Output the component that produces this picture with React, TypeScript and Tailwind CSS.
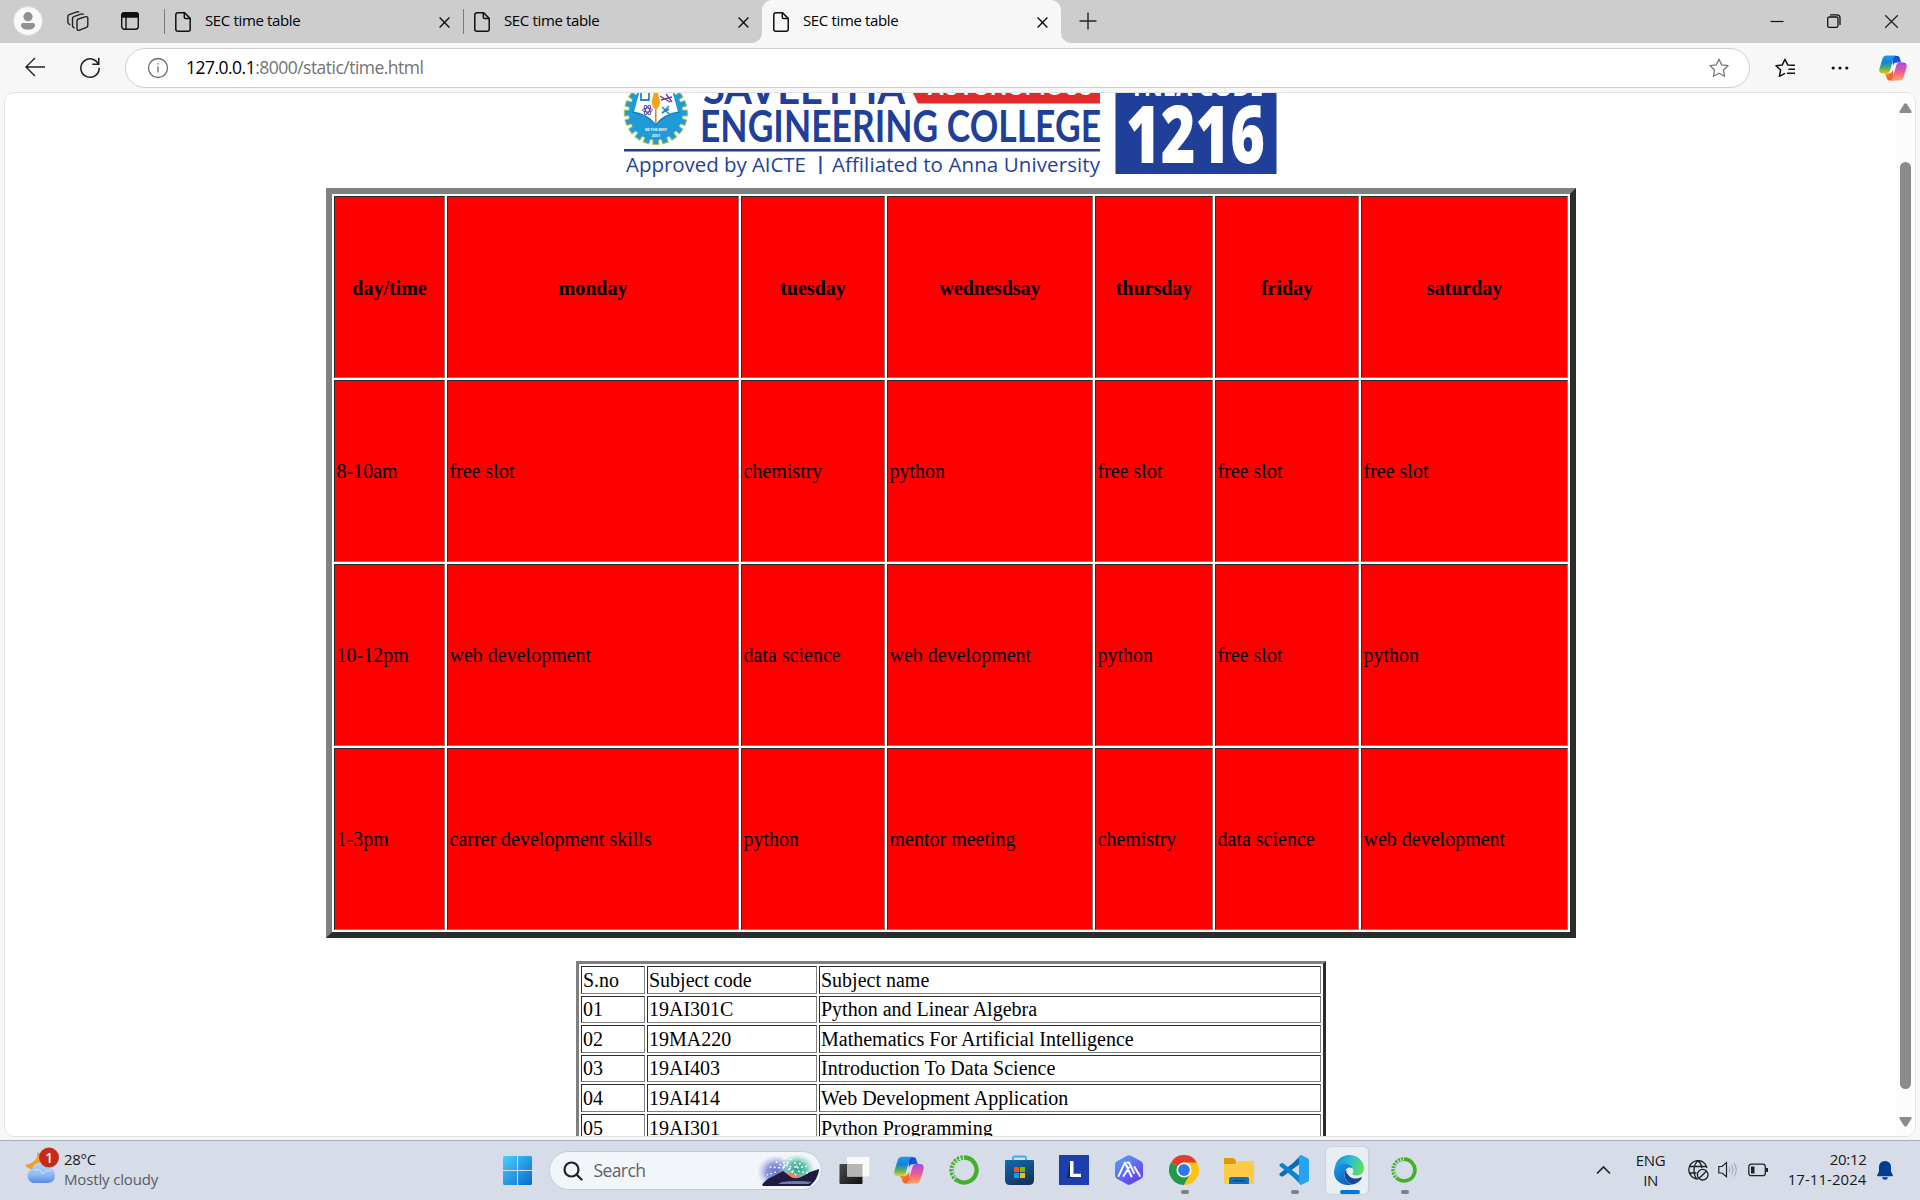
import React from "react";

type P = { children?: React.ReactNode };

const DocIcon = () => (
  <svg width="16" height="20" viewBox="0 0 16 20" fill="none" stroke="#111" strokeWidth="1.5">
    <path d="M2.8 .8H9.6L15.2 6.4V17.2a2 2 0 0 1-2 2H2.8a2 2 0 0 1-2-2V2.8a2 2 0 0 1 2-2Z" />
    <path d="M9.3 1V5.2a1.4 1.4 0 0 0 1.4 1.4H15" />
  </svg>
);

const TabClose = () => (
  <svg width="11" height="11" viewBox="0 0 11 11" stroke="#111" strokeWidth="1.4">
    <path d="M.6 .6 10.4 10.4M10.4 .6.6 10.4" />
  </svg>
);

const Tab = ({ active = false }: { active?: boolean }) => (
  <div className={active ? "relative flex h-[43px] w-[299px] items-center rounded-t-[10px] bg-[#f7f7f7]" : "relative flex h-[43px] w-[299px] items-center"}>
    {active ? (
      <>
        <svg className="absolute bottom-0 -left-[10px]" width="10" height="10"><path d="M10 0V10H0A10 10 0 0 0 10 0Z" fill="#f7f7f7" /></svg>
        <svg className="absolute bottom-0 -right-[10px]" width="10" height="10"><path d="M0 0V10H10A10 10 0 0 1 0 0Z" fill="#f7f7f7" /></svg>
      </>
    ) : (
      <div className="absolute top-[9px] left-0 h-[25px] w-px bg-[#7c7c7c]" />
    )}
    <div className="ml-[11px] h-5 w-4"><DocIcon /></div>
    <span className="ml-[14px] -mt-[3px] text-[15px] tracking-[-0.36px]">SEC time table</span>
    <div className="mt-px mr-[13.5px] ml-auto"><TabClose /></div>
  </div>
);

const Copilot = ({ id, w, h }: { id: string; w: number; h: number }) => (
  <svg width={w} height={h} viewBox="0 0 28 26">
    <defs>
      <linearGradient id={id + "a"} x1="0" y1="0" x2="0" y2="1">
        <stop offset="0" stopColor="#1a9af0" /><stop offset=".4" stopColor="#1583d8" /><stop offset=".7" stopColor="#52b35a" /><stop offset="1" stopColor="#f0c80e" />
      </linearGradient>
      <linearGradient id={id + "b"} x1="0" y1="0" x2="0" y2="1">
        <stop offset="0" stopColor="#a24df0" /><stop offset=".5" stopColor="#ee5a92" /><stop offset="1" stopColor="#fda45c" />
      </linearGradient>
      <linearGradient id={id + "c"} x1="0" y1="0" x2="1" y2="1">
        <stop offset="0" stopColor="#1646c8" /><stop offset="1" stopColor="#2063e8" />
      </linearGradient>
      <linearGradient id={id + "d"} x1="0" y1="0" x2="1" y2="1">
        <stop offset="0" stopColor="#f9a13a" /><stop offset="1" stopColor="#f04a28" />
      </linearGradient>
    </defs>
    <path d="M13 1H18.5C20.5 1 20.8 3 21.4 5.2 21.9 7 22.8 7.6 24 7.6H18C15.5 7.6 14.6 8.6 14 11Z" fill={`url(#${id}c)`} />
    <path d="M15 25.5H10.5C8.300 25.500 7.800 23.500 7 21 6.500 19.200 5.500 18.500 4 18.500H9.500C12 18.500 13.200 17 14 14.500Z" fill={`url(#${id}d)`} />
    <path d="M8 .6H17.500C15.500 .8 14.800 2.500 14.200 4.600L11 15.500C10.400 17.600 9.200 18.600 7.200 18.600H3.800C.8 18.600 -.3 16.500 .5 13.500L3.200 4.500C4 1.800 5.300 .6 8 .6Z" fill={`url(#${id}a)`} />
    <path d="M20 25.500H10.500C12.500 25.300 13.300 23.600 14 21.500L17.200 10.500C17.800 8.500 19 7.500 21 7.500H24.200C27.200 7.500 28.300 9.500 27.500 12.500L24.800 21.600C24 24.300 22.700 25.500 20 25.500Z" fill={`url(#${id}b)`} />
  </svg>
);

const star = "M10 1.200 12.700 6.900 19 7.700 14.400 12 15.600 18.300 10 15.200 4.400 18.300 5.600 12 1 7.700 7.300 6.900Z";

const TitleBar = () => (
  <div className="flex h-[43px] shrink-0 bg-[#cdcdcd]">
    <svg className="mt-[6px] ml-[13px]" width="30" height="30" viewBox="0 0 30 30">
      <circle cx="15" cy="15" r="14.500" fill="#f9f9f9" stroke="#ddd" />
      <circle cx="15" cy="10.700" r="4.600" fill="#919191" />
      <path d="M8 19a2 2 0 0 1 2-2H20a2 2 0 0 1 2 2c0 3-3 4.700-7 4.700S8 22 8 19Z" fill="#919191" />
    </svg>
    <svg className="mt-[11px] ml-6" width="22" height="21" viewBox="0 0 22 21" fill="none" stroke="#222" strokeWidth="1.400" strokeLinejoin="round">
      <path d="M11.300 8 18.800 5.700a1.500 1.500 0 0 1 2 1.400V14.500a2 2 0 0 1-1.400 1.900L12 19.300a1.500 1.500 0 0 1-2-1.400V9.900A2 2 0 0 1 11.300 8Z" />
      <path d="M7.500 17.200 6.300 16.300a2 2 0 0 1-.8-1.600V7.500a2 2 0 0 1 1.300-1.900L14.600 2.900q1.200-.3 2 .8" />
      <path d="M3.200 14 1.700 12.800a2 2 0 0 1-.8-1.600V5.500A2 2 0 0 1 2.200 3.600L10 .9q1.200-.3 2 .6" />
    </svg>
    <svg className="mt-3 ml-8" width="18" height="18" viewBox="0 0 18 18" fill="none" stroke="#111" strokeWidth="1.400">
      <rect x=".7" y=".7" width="16.600" height="16.600" rx="2.800" />
      <path d="M.7 5V3A2.300 2.300 0 0 1 3 .7H15A2.300 2.300 0 0 1 17.300 3V5Z" fill="#111" />
      <path d="M5 5V17" />
    </svg>
    <div className="ml-[25px] flex">
      <Tab /><Tab /><Tab active />
    </div>
    <svg className="mt-3 ml-[18px]" width="18" height="18" stroke="#222" strokeWidth="1.400"><path d="M9 .5V17.500M.5 9H17.500" /></svg>
    <div className="mt-[14px] mr-[21px] ml-auto flex">
      <svg width="14" height="15" stroke="#111" strokeWidth="1.200"><path d="M.5 7.500H13.500" /></svg>
      <svg className="ml-[43px]" width="14" height="15" fill="none" stroke="#111" strokeWidth="1.300"><rect x=".7" y="3" width="10.300" height="10.300" rx="1.500" /><path d="M3 .9H10A3 3 0 0 1 13 3.900V11" /></svg>
      <svg className="ml-[43px]" width="15" height="15" stroke="#222" strokeWidth="1.300"><path d="M1.200 1.200 13.800 13.800M13.800 1.200 1.200 13.800" /></svg>
    </div>
  </div>
);

const ToolBar = () => (
  <div className="flex h-[49px] shrink-0 bg-[#f7f7f7]">
    <svg className="mt-[14px] ml-[25px] shrink-0" width="21" height="20" fill="none" stroke="#222" strokeWidth="1.400"><path d="M20 10H1M10 1 1 10l9 9" /></svg>
    <svg className="mt-[14px] ml-[33px] shrink-0" width="22" height="22" fill="none" stroke="#222" strokeWidth="1.500"><path d="M19.500 7.500A9.200 9.200 0 1 0 20.200 10.700M19.800 .8V7.300H13.300" /></svg>
    <div className="mt-[5px] ml-6 flex h-[40px] w-[1625px] shrink-0 items-center rounded-full border border-[#cfcfcf] bg-white">
      <svg className="ml-[21px]" width="22" height="22" fill="none" stroke="#6c6c6c" strokeWidth="1.300"><circle cx="11" cy="11" r="9.500" /><path d="M11 9.500V15.500" /><path d="M11 6V7.500" /></svg>
      <span className="-mt-[2px] ml-[17px] text-[17.5px] tracking-[-0.52px] text-[#737373]"><span className="text-black">127.0.0.1</span>:8000/static/time.html</span>
      <svg className="mr-5 ml-auto" width="20" height="20" viewBox="0 0 20 20" fill="none" stroke="#777" strokeWidth="1.300" strokeLinejoin="round"><path d={star} /></svg>
    </div>
    <svg className="mt-[15px] ml-[25px] shrink-0" width="21" height="20" viewBox="0 0 21 20" fill="none" stroke="#111" strokeWidth="1.500" strokeLinejoin="round">
      <path d="M17 7.300 12.700 6.900 10 1.200 7.300 6.900 1 7.700 5.600 12 4.400 18.300 10 15.300M13 7.200H20M13.500 11.300H20M12 15.300H20" />
    </svg>
    <svg className="mt-[22px] ml-[35px] shrink-0" width="18" height="6" fill="#111"><circle cx="2.200" cy="3" r="1.600" /><circle cx="9" cy="3" r="1.600" /><circle cx="15.800" cy="3" r="1.600" /></svg>
    <div className="mt-[12px] ml-[30px] shrink-0"><Copilot id="tb" w={28} h={26} /></div>
  </div>
);

const teeth = Array.from({ length: 20 }, (_, i) => i * 18);

const Banner = () => (
  <svg className="ml-[614px] block shrink-0" width="660" height="95" viewBox="620 93 660 95">
    <g>
      {teeth.map((a) => (
        <rect key={a} x="652.900" y="81.500" width="5.800" height="10" fill="#2299d8" stroke="#a4c94c" strokeWidth="1" transform={`rotate(${a} 655.800 113)`} />
      ))}
      <circle cx="655.800" cy="113" r="27" fill="#1f9bd9" />
      <path d="M634 112 640 90H672L678 112Q664 115 655.800 124 647 115 634 112Z" fill="#fff" />
      <path d="M632 112Q647 114 655.800 125 664 114 680 112" fill="none" stroke="#1781c0" strokeWidth="1.500" />
      <path d="M655.800 108V123" stroke="#b58c3c" strokeWidth="1.500" />
      <path d="M654 92H658L659 98Q662 105 655.800 110 650 105 652.500 98Z" fill="#f3a51c" />
      <path d="M641 93V100H649V93" fill="none" stroke="#2387c8" strokeWidth="1.800" />
      <path d="M660 96 670 102M661 100 672 97M666 94 672 102" stroke="#6a3b91" strokeWidth="1.300" />
      <g fill="none" stroke="#59489d" strokeWidth="1">
        <ellipse cx="647.500" cy="110" rx="5" ry="2" /><ellipse cx="647.500" cy="110" rx="5" ry="2" transform="rotate(60 647.500 110)" /><ellipse cx="647.500" cy="110" rx="5" ry="2" transform="rotate(120 647.500 110)" />
      </g>
      <path d="M662 107 670 115M669 106 662 113 669 109" fill="none" stroke="#2387c8" strokeWidth="1.500" />
      <g fill="#e7f6ff" fontFamily="Open Sans, sans-serif" fontWeight="700" fontSize="4" textAnchor="middle">
        <text x="656" y="131.300" textLength="22">BE THE BEST</text>
        <text x="656" y="136.500">2001</text>
      </g>
    </g>
    <g fill="#1f3f99" fontFamily="Lato, sans-serif" fontWeight="700">
      <text x="703" y="103.500" fontSize="43" textLength="202" lengthAdjust="spacingAndGlyphs">SAVEETHA</text>
      <text x="700" y="142.300" fontSize="43" textLength="401" lengthAdjust="spacingAndGlyphs">ENGINEERING COLLEGE</text>
    </g>
    <path d="M913 93H1100V103.500H918Z" fill="#e32a2c" />
    <text x="928" y="95" fill="#fff" fontFamily="Lato, sans-serif" fontWeight="900" fontSize="22" textLength="164" lengthAdjust="spacingAndGlyphs">AUTONOMOUS</text>
    <rect x="624" y="149" width="476" height="2.500" fill="#1f3f99" />
    <text x="626" y="172" fill="#1f3f99" fontFamily="Open Sans, sans-serif" fontWeight="500" fontSize="20.500" textLength="180" lengthAdjust="spacing">Approved by AICTE</text>
    <rect x="819.500" y="156" width="2" height="18" fill="#1f3f99" />
    <text x="832" y="172" fill="#1f3f99" fontFamily="Open Sans, sans-serif" fontWeight="500" fontSize="20.500" textLength="268" lengthAdjust="spacing">Affiliated to Anna University</text>
    <rect x="1115.500" y="93" width="161" height="81" fill="#1f3f99" />
    <g fill="#fff" fontFamily="Open Sans, sans-serif" fontWeight="700">
      <text x="1130" y="96" fontSize="23" textLength="133" lengthAdjust="spacingAndGlyphs">TNEA CODE</text>
      <text x="1126" y="162.500" fontSize="80" fontWeight="800" textLength="139" lengthAdjust="spacingAndGlyphs">1216</text>
    </g>
  </svg>
);

const rows = [
  ["day/time", "monday", "tuesday", "wednesdsay", "thursday", "friday", "saturday"],
  ["8-10am", "free slot", "chemistry", "python", "free slot", "free slot", "free slot"],
  ["10-12pm", "web development", "data science", "web development", "python", "free slot", "python"],
  ["1-3pm", "carrer development skills", "python", "mentor meeting", "chemistry", "data science", "web development"],
];

const subjects = [
  ["S.no", "Subject code", "Subject name"],
  ["01", "19AI301C", "Python and Linear Algebra"],
  ["02", "19MA220", "Mathematics For Artificial Intelligence"],
  ["03", "19AI403", "Introduction To Data Science"],
  ["04", "19AI414", "Web Development Application"],
  ["05", "19AI301", "Python Programming"],
];

const bevelIn = "border border-t-[#2c2c2c] border-l-[#2c2c2c] border-r-[#808080] border-b-[#808080]";

const Page = () => (
  <div className="h-[1047px] shrink-0 bg-[#f7f7f7] px-[4px]">
    <div className="flex h-[1045px] overflow-hidden rounded-[10px] border border-[#e2e2e2] bg-white">
      <div className="flex h-[1043px] w-[1891px] flex-col overflow-hidden font-['Liberation_Serif',serif] text-[20px] leading-[23px] text-black">
        <div className="ml-px"><Banner /></div>
        <div className="ml-[321px] grid h-[750px] w-[1250px] shrink-0 grid-cols-[111px_292px_144px_206px_118px_144px_207px] grid-rows-[182px_182px_182px_182px] gap-[2px] border-[6px] border-t-[#808080] border-l-[#808080] border-r-[#2c2c2c] border-b-[#2c2c2c] p-[2px]">
          {rows.map((r, i) =>
            r.map((c, j) => (
              <div key={`${i}-${j}`} className={bevelIn + (i === 0 ? " flex items-center justify-center bg-[#ff0000] pt-[2px] font-bold" : " flex items-center bg-[#ff0000] pt-px pl-[1.5px]")}>{c}</div>
            ))
          )}
        </div>
        <div className="mt-[23px] ml-[571px] grid w-[750px] shrink-0 grid-cols-[64px_170px_502px] grid-rows-[28px_27px_28px_27px_28px_28px] gap-[2px] border-[3px] border-t-[#808080] border-l-[#808080] border-r-[#2c2c2c] border-b-[#2c2c2c] p-[2px]">
          {subjects.map((r) => r.map((c) => <div key={c} className={bevelIn + " flex items-center pl-px"}>{c}</div>))}
        </div>
      </div>
      <div className="flex w-[18px] flex-col items-center bg-[#fcfcfc]">
        <svg className="mt-[10px]" width="13" height="11"><path d="M5 1.200Q6.500-.8 8 1.200L12.300 8Q13.300 10 11.500 10H1.500Q-.3 10 .7 8Z" fill="#8b8b8b" /></svg>
        <div className="mt-[48px] h-[927px] w-[11px] rounded-full bg-[#8b8b8b]" />
        <svg className="mt-[28px]" width="13" height="11"><path d="M5 8.800Q6.500 10.800 8 8.800L12.300 2Q13.300 0 11.500 0H1.500Q-.3 0 .7 2Z" fill="#8b8b8b" /></svg>
      </div>
    </div>
  </div>
);

const Slot = ({ children, dot = false }: P & { dot?: boolean }) => (
  <div className="relative flex h-[58px] w-[55px] shrink-0 items-center justify-center">
    {children}
    {dot && <div className="absolute bottom-[5px] left-[24px] h-[4px] w-[8px] rounded-full bg-[#7c8087]" />}
  </div>
);

const Ring = ({ s }: { s: number }) => (
  <svg width={s} height={s} viewBox="0 0 30 30" fill="none" stroke="#43b02a">
    <path d="M15 2.500A12.500 12.500 0 1 1 8 25.300" strokeWidth="4.300" />
    <path d="M8 25.300A12.500 12.500 0 0 1 15 2.500" strokeWidth="4.500" strokeDasharray="2.300 1.200" />
    <path d="M6 22A12 12 0 0 1 13 3.500" stroke="#d5dde8" strokeWidth="1.200" strokeDasharray="1.300 1.500" />
  </svg>
);

const Edge = () => (
  <svg width="30" height="30" viewBox="0 0 30 30">
    <defs>
      <linearGradient id="e1" x1="0" y1=".3" x2="1" y2=".6"><stop offset="0" stopColor="#1b8fd8" /><stop offset=".5" stopColor="#2bc0d8" /><stop offset="1" stopColor="#62e04a" /></linearGradient>
      <linearGradient id="e2" x1="0" y1="0" x2=".5" y2="1"><stop offset="0" stopColor="#1aa0e8" /><stop offset="1" stopColor="#0b62c4" /></linearGradient>
    </defs>
    <path d="M1 12C2 5 8 0 15 0 24 0 30 6.500 30 13 30 18 26.500 20.500 22.500 20.500 19 20.500 17.500 19.300 18.300 17.800 20.500 14 17 9.500 11 9.500 6 9.500 2 13 .1 16Z" fill="url(#e1)" />
    <path d="M.1 16C1 11.500 5.500 8.500 10.500 8.500 15 8.500 18.500 11 18.800 14 16 11.500 11.500 13 10.500 18 9.500 24 14 29 19 29.500 8 32-1 25 .1 16Z" fill="url(#e2)" />
    <path d="M11 16C9 21 12 28.500 19 29.500 23 28.500 26 26 27.800 23.200 28.200 22.500 27.600 22 26.800 22.400 20 25.500 12.500 22 13 15Z" fill="#12479c" />
    <circle cx="15.800" cy="16" r="3.500" fill="#e9eef5" />
  </svg>
);

const Taskbar = () => (
  <div className="flex h-[60px] shrink-0 overflow-hidden border-t border-[#a7adb8] bg-[#d6dde9] text-[15px] leading-[20px] text-[#191919]">
    <svg className="mt-[5px] ml-[24px] shrink-0" width="36" height="40" viewBox="0 0 36 40">
      <defs><linearGradient id="cl" x1="0" y1="0" x2="0" y2="1"><stop offset="0" stopColor="#b9d6f8" /><stop offset=".6" stopColor="#8fb9f2" /><stop offset="1" stopColor="#588ce2" /></linearGradient></defs>
      <path d="M13 6Q15 16 1 19 4 24 12 24L22 20 17 8Z" fill="#f2a024" />
      <path d="M9 37A7.500 7.500 0 0 1 8 23Q9.500 17 16 16.500 21 16 23.500 22 31 22 31 29.500 31 37 23 37Z" fill="url(#cl)" />
      <path d="M10 24Q16 22 19 28 22 23 27 25" fill="none" stroke="#d4e6fc" strokeWidth="1" />
      <circle cx="25" cy="11.500" r="10" fill="#c42b1c" />
      <text x="25" y="16.500" textAnchor="middle" fontSize="13.500" fontWeight="600" fill="#fff" fontFamily="Open Sans, sans-serif">1</text>
    </svg>
    <div className="mt-[8px] ml-1 w-[425.5px] tracking-[-0.3px]"><div>28°C</div><div className="text-[#555b64] tracking-[-0.15px]">Mostly cloudy</div></div>
    <Slot>
      <svg width="29" height="29" viewBox="0 0 29 29"><defs><linearGradient id="wn" x1="0" y1="0" x2="1" y2="1"><stop offset="0" stopColor="#4bd0fb" /><stop offset="1" stopColor="#0669ce" /></linearGradient></defs><path d="M1 0H14V14H0V1ZM15 0H28L29 1V14H15ZM0 15H14V29H1L0 28ZM15 15H29V28L28 29H15Z" fill="url(#wn)" /></svg>
    </Slot>
    <div className="mt-[10px] mr-[4.5px] ml-[4px] flex h-[39px] w-[273.5px] shrink-0 items-center rounded-full border border-[#c3cbd9] bg-[#f2f5f9]">
      <svg className="ml-[13px]" width="20" height="20" fill="none" stroke="#222" strokeWidth="2.200"><circle cx="8.500" cy="8.500" r="7" /><path d="M13.500 13.500 18.500 18.500" strokeLinecap="round" /></svg>
      <span className="-mt-px ml-[11px] text-[17.5px] tracking-[-0.6px] text-[#5e6268]">Search</span>
      <svg className="mr-[2px] ml-auto" width="61" height="32" viewBox="0 0 61 32">
        <defs>
          <radialGradient id="f1"><stop offset="0" stopColor="#6b74c4" /><stop offset=".5" stopColor="#8f97dc" /><stop offset="1" stopColor="#b9bdf0" stopOpacity="0" /></radialGradient>
          <radialGradient id="f2"><stop offset="0" stopColor="#2fa08c" /><stop offset=".5" stopColor="#69c4b0" /><stop offset="1" stopColor="#a5e4d6" stopOpacity="0" /></radialGradient>
          <clipPath id="fc"><path d="M0 0H61V15Q60 24 52 31H5Q0 24 0 16Z" /></clipPath>
        </defs>
        <g clipPath="url(#fc)">
          <ellipse cx="18" cy="17" rx="19" ry="17" fill="url(#f1)" /><ellipse cx="39" cy="14" rx="18" ry="15" fill="url(#f2)" />
          <path d="M14 25 22 17 34 18 46 23Z" fill="#e58a5e" />
          <path d="M3 31Q9 23 16 21L25 16 33 22Q38 25 45 21L52 17 61 14V31Z" fill="#211a45" />
          <path d="M24 27Q38 25 54 27L50 29H20Z" fill="#6f7fa8" />
        </g>
        <g stroke="#fff" strokeWidth="1.400" strokeDasharray="1.800 2.400"><path d="M26 13 16 5M26 13V2M26 11 34 3M26 13 11 12M28 10 36 17M30 14 38 20M37 13V5M38 12 45 6M39 13 50 11M40 16 50 18M18 17 9 20M29 8 33 12" /></g>
      </svg>
    </div>
    <Slot><svg width="31" height="29" viewBox="0 0 31 29"><defs><linearGradient id="tv" x1="0" y1="0" x2="1" y2="1"><stop offset="0" stopColor="#4a4a4a" /><stop offset="1" stopColor="#111" /></linearGradient></defs><rect x=".5" y="8" width="23" height="20" rx="1" fill="url(#tv)" /><rect x="8" y="1" width="22.500" height="19.500" rx="1" fill="#fafafa" /><rect x="8" y="8" width="15.500" height="12.500" fill="#b5b5b5" /></svg></Slot>
    <Slot><Copilot id="tk" w={30} h={28} /></Slot>
    <Slot><Ring s={30} /></Slot>
    <Slot><svg width="29" height="30" viewBox="0 0 29 30"><defs><linearGradient id="st" x1="0" y1="0" x2=".5" y2="1"><stop offset="0" stopColor="#0f6cb5" /><stop offset="1" stopColor="#15355f" /></linearGradient></defs><path d="M8 6V3a1.500 1.500 0 0 1 1.500-1.500h10A1.500 1.500 0 0 1 21 3V6" fill="none" stroke="#29b6ee" strokeWidth="1.800" /><path d="M0 6Q0 5 1 5H28Q29 5 29 6V25Q29 30 24 30H5Q0 30 0 25Z" fill="url(#st)" /><rect x="9" y="12" width="5" height="5" fill="#f25022" /><rect x="15" y="12" width="5" height="5" fill="#7fba00" /><rect x="9" y="18" width="5" height="5" fill="#00a4ef" /><rect x="15" y="18" width="5" height="5" fill="#ffb900" /></svg></Slot>
    <Slot><svg width="30" height="30"><rect width="30" height="30" fill="#1d3fae" /><path d="M11 6 8 23H14V19Z" fill="#0c2b5c" /><path d="M11 6H14.500V18.800H22V22H11Z" fill="#fff" /></svg></Slot>
    <Slot><svg width="28" height="30" viewBox="0 0 28 30"><defs><linearGradient id="hx" x1="0" y1="0" x2=".7" y2="1"><stop offset="0" stopColor="#52a8f2" /><stop offset="1" stopColor="#6a3df0" /></linearGradient></defs><path d="M12 .7Q14-.4 16 .7L26 6.300Q28 7.500 28 9.500V20.500Q28 22.500 26 23.700L16 29.300Q14 30.400 12 29.300L2 23.700Q0 22.500 0 20.500V9.500Q0 7.500 2 6.300Z" fill="url(#hx)" /><path d="M3.500 21 10 7.500 16.500 21.500M8.500 21 14 12.500M12.500 7.500 14 7.500 19 18M19.500 12 25 21" fill="none" stroke="#fff" strokeWidth="1.900" strokeLinejoin="round" strokeLinecap="round" /></svg></Slot>
    <Slot dot><svg width="30" height="30" viewBox="0 0 30 30"><path d="M15 15 2 7.500A15 15 0 0 1 28 7.500Z" fill="#e33b2e" /><path d="M2 7.500A15 15 0 0 0 15 30L21.500 18.700 15 15Z" fill="#229a49" /><path d="M15 30A15 15 0 0 0 28 7.500H15L21.500 18.700Z" fill="#fcc30f" /><circle cx="15" cy="15" r="7.500" fill="#fff" /><circle cx="15" cy="15" r="5.900" fill="#3078ea" /></svg></Slot>
    <Slot><svg className="mt-[2px]" width="30" height="28" viewBox="0 0 30 28"><path d="M0 2Q0 1 1 1H9.500L12 3.500V8H0Z" fill="#dd9a05" /><path d="M0 7H11L14 4H29Q30 4 30 5V27H0Z" fill="#fdcb45" /><path d="M5 27V22Q5 20 7 20H23Q25 20 25 22V27Z" fill="#0d70c0" /><path d="M9 23.700H21" stroke="#074985" strokeWidth="1.200" /></svg></Slot>
    <Slot dot><svg width="30" height="30" viewBox="0 0 30 30"><path d="M.6 18.600Q0 19.600.8 20.400L2.500 21.600 4 21.500 22 8V0L14 8Z" fill="#0b6cb4" /><path d="M.6 11Q0 10 .8 9.300L2.500 8.100 4 8.200 22 22V30L14 22Z" fill="#0c84d0" /><path d="M22 0 29 3.500Q30 4 30 5V25Q30 26 29 26.500L22 30 20 28.500V1.500Z" fill="#27a3ee" /></svg></Slot>
    <div className="relative flex h-[58px] w-[55px] shrink-0 items-center justify-center">
      <div className="absolute top-[5px] left-[14px] h-[49px] w-[34px] rounded-[6px] border border-[#c9d0dc] bg-[#e3e8f0]" />
      <div className="absolute top-[5px] left-[3px] h-[49px] w-[44px] rounded-[6px] border border-[#ccd3df] bg-[#e9eef5]" />
      <div className="relative"><Edge /></div>
      <div className="absolute bottom-[5px] left-[18px] h-[4px] w-[20px] rounded-full bg-[#0078d7]" />
    </div>
    <Slot dot><Ring s={26} /></Slot>
    <svg className="mt-[24px] ml-[164px] shrink-0" width="15" height="10" fill="none" stroke="#222" strokeWidth="1.700"><path d="M1 8.500 7.500 2 14 8.500" /></svg>
    <div className="mt-[9px] ml-[20px] w-[40px] text-center tracking-[-0.4px]"><div>ENG</div><div>IN</div></div>
    <svg className="mt-[19px] ml-[17px] shrink-0" width="21" height="21" viewBox="0 0 21 21" fill="none" stroke="#1f1f1f" strokeWidth="1.300"><path d="M9 19Q6 16 6 10T10 .8Q13 3 14 8M10 19A9.200 9.200 0 1 1 19 8M1.500 6.500H18.500M1.500 13H8.500" /><circle cx="14.700" cy="14.700" r="5.300" /><path d="M11.200 18.200 18.200 11.200" /></svg>
    <svg className="mt-[20px] ml-[9px] shrink-0" width="21" height="18" fill="none" stroke="#222" strokeWidth="1.200"><path d="M.8 5.500H4L8.500 1.500V15.800L4 12H.8Z" /><g stroke="#a5abb5"><path d="M11 6Q12.500 8.700 11 11.500M13.500 4Q16.500 8.700 13.500 13.500M16 2Q20.500 8.700 16 15.500" /></g></svg>
    <svg className="mt-[22px] ml-[9px] shrink-0" width="21" height="15" fill="none" stroke="#222" strokeWidth="1.300"><rect x=".8" y="1.200" width="16.500" height="11.500" rx="2.500" /><rect x="3" y="3.500" width="3.500" height="7" fill="#222" stroke="none" /><path d="M18.800 5V9" strokeWidth="2.400" /></svg>
    <div className="mt-[8px] ml-[10px] w-[88px] text-right tracking-[-0.3px]"><div>20:12</div><div className="tracking-[0.05px]">17-11-2024</div></div>
    <svg className="mt-[20px] ml-[10px] shrink-0" width="16" height="19" fill="#003e92"><path d="M8 0Q14 0 14 6.500V10.500L16 14.500Q16 15.300 15 15.300H1Q0 15.300 0 14.500L2 10.500V6.500Q2 0 8 0ZM5 16.300H11Q10.500 18.800 8 18.800T5 16.300Z" /></svg>
  </div>
);

export default function App() {
  return (
    <div className="flex h-[1200px] w-[1920px] flex-col overflow-hidden bg-[#f7f7f7] font-['Open_Sans','Noto_Sans',sans-serif] whitespace-nowrap text-black">
      <TitleBar />
      <ToolBar />
      <Page />
      <div className="h-px shrink-0" />
      <Taskbar />
    </div>
  );
}
